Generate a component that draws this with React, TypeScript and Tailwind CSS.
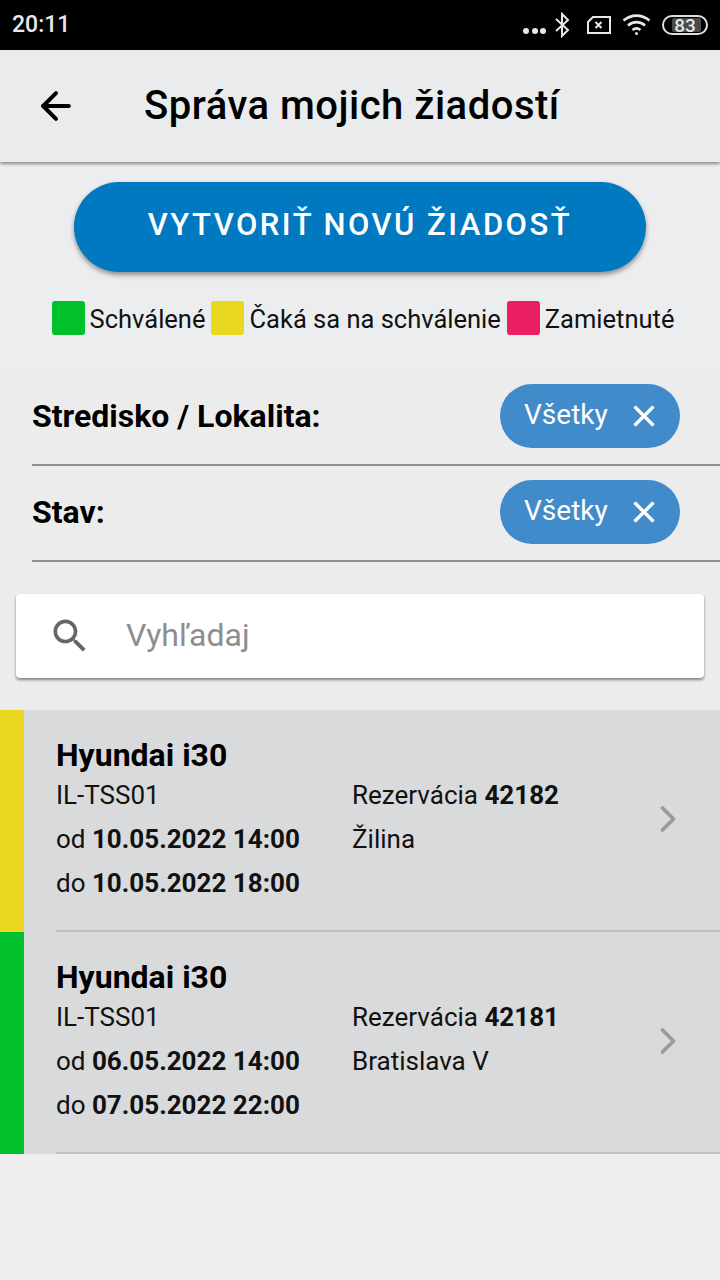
import React from 'react';
import { ArrowLeft, ChevronRight, X } from 'lucide-react';

const font = "font-['Roboto',sans-serif]";

const StatusIcons = () => (
  <div className="flex items-center">
    <div className="flex gap-[2.500px] mt-[12px] mr-[8px]">
      <span className="w-[6px] h-[6px] rounded-full bg-[#e8e8e8]" />
      <span className="w-[6px] h-[6px] rounded-full bg-[#e8e8e8]" />
      <span className="w-[6px] h-[6px] rounded-full bg-[#e8e8e8]" />
    </div>
    <svg width="16" height="26" viewBox="0 0 16 26" fill="none" stroke="#e8e8e8" strokeWidth="2" className="mr-[16px]">
      <path d="M2 7l12 11-6 6V2l6 6L2 19" />
    </svg>
    <svg width="25" height="20" viewBox="0 0 25 20" fill="none" stroke="#e8e8e8" strokeWidth="2" className="mr-[11px]">
      <path d="M7 2h17v16H2V7z" />
      <path d="M9.5 7l6 6M15.5 7l-6 6" />
    </svg>
    <svg width="29" height="22" viewBox="0 0 29 22" fill="none" stroke="#e8e8e8" strokeWidth="2.6" className="mr-[11px]">
      <path d="M1.5 6.5c8-6.500 18-6.500 26 0" />
      <path d="M6 11.500c5-4.500 12-4.500 17 0" />
      <path d="M10.500 16c2.500-2 5.500-2 8 0" />
      <circle cx="14.500" cy="19.500" r="1.500" fill="#e8e8e8" stroke="none" />
    </svg>
    <div className="relative w-[46px] h-[20px] rounded-full border-2 border-[#e0e0e0] flex items-center justify-center overflow-hidden">
      <div className="absolute left-[8px] top-[1px] bottom-[1px] w-[29px] rounded-[2px] bg-[#4a4a4a]" />
      <span className="relative text-[19px] leading-none font-medium text-[#e8e8e8]">83</span>
    </div>
  </div>
);

const Legend = ({ color, label }: { color: string; label: string }) => (
  <div className="flex items-start gap-[5px] h-[34px]">
    <span className={`w-[33px] h-[34px] rounded-[3px] ${color}`} />
    <span className="text-[25.500px] leading-[37px] h-[34px] text-[#111111]">{label}</span>
  </div>
);

const Filter = ({ label }: { label: string }) => (
  <div className="ml-[32px] h-[96px] border-b-2 border-[#8f8f8f] flex items-center justify-between pr-[40px] pb-[2px]">
    <span className="text-[32px] font-bold text-black">{label}</span>
    <div className="w-[180px] h-[64px] rounded-full bg-[#428bca] flex items-center pl-[24px] text-white">
      <span className="text-[28px] leading-none -mt-[3px] flex-1">Všetky</span>
      <X size={34} strokeWidth={2.4} className="mr-[19px]" />
    </div>
  </div>
);

const Row = ({
  color,
  from,
  to,
  id,
  place,
}: {
  color: string;
  from: string;
  to: string;
  id: string;
  place: string;
}) => (
  <div className="flex h-[222px]">
    <div className={`w-[24px] ${color}`} />
    <div className="flex-1 bg-[#d9dadc] pl-[32px]">
      <div className="h-full border-b-2 border-[#bfc0c2] flex items-center text-[#111111]">
        <div className="w-[296px] -mt-[1px]">
          <div className="text-[32px] leading-[43px] font-bold text-black">Hyundai i30</div>
          <div className="text-[26px] leading-[44px] -mt-[4px]">IL-TSS01</div>
          <div className="text-[26px] leading-[44px]">
            od <b>{from}</b>
          </div>
          <div className="text-[26px] leading-[44px]">
            do <b>{to}</b>
          </div>
        </div>
        <div className="flex-1 self-start mt-[63px]">
          <div className="text-[26px] leading-[44px]">
            Rezervácia <b>{id}</b>
          </div>
          <div className="text-[26px] leading-[44px]">{place}</div>
        </div>
        <ChevronRight size={44} strokeWidth={2} className="text-[#9a9b9d] mr-[30px] -mt-[2px]" />
      </div>
    </div>
  </div>
);

const App: React.FC = () => {
  return (
    <div className={`${font} w-[720px] h-[1280px] overflow-hidden bg-[#eeeeef] flex flex-col`}>
      {/* Status bar */}
      <div className="h-[50px] bg-black flex items-center justify-between pl-[12px] pr-[12px]">
        <span className="text-[23px] font-medium text-[#e8e8e8]">20:11</span>
        <StatusIcons />
      </div>

      {/* Header */}
      <div className="h-[112px] bg-[#e9ebed] flex items-center shadow-[0_2px_3px_rgba(0,0,0,0.4)] relative z-10">
        <ArrowLeft size={44} strokeWidth={2.2} className="ml-[34px] text-black" />
        <span className="ml-[66px] text-[40px] font-medium tracking-[0.5px] text-black">Správa mojich žiadostí</span>
      </div>

      {/* Create button */}
      <div className="bg-[#ebedef] pt-[20px] flex flex-col items-center">
        <button className="w-[572px] h-[90px] rounded-full bg-[#0079c1] text-white text-[31px] font-medium tracking-[2.500px] pb-[4px] shadow-[0_3px_5px_rgba(0,0,0,0.4)]">
          VYTVORIŤ NOVÚ ŽIADOSŤ
        </button>
        <div className="flex gap-[6px] mt-[29px] mb-[33px] ml-[6px]">
          <Legend color="bg-[#00c12b]" label="Schválené" />
          <Legend color="bg-[#e9d81f]" label="Čaká sa na schválenie" />
          <Legend color="bg-[#ea1f63]" label="Zamietnuté" />
        </div>
      </div>

      {/* Filters */}
      <div className="bg-[#ececec] pt-[2px]">
        <Filter label="Stredisko / Lokalita:" />
        <Filter label="Stav:" />
      </div>

      {/* Search */}
      <div className="bg-[#ececec] px-[16px] pt-[32px] pb-[32px]">
        <div className="h-[84px] bg-white rounded-[4px] flex items-center shadow-[0_2px_3px_rgba(0,0,0,0.45)]">
          <svg width="44" height="44" viewBox="0 0 24 24" fill="#666666" className="ml-[32px]">
            <path d="M15.5 14h-.79l-.28-.27C15.41 12.59 16 11.11 16 9.5 16 5.91 13.09 3 9.5 3S3 5.91 3 9.5 5.91 16 9.5 16c1.61 0 3.09-.59 4.23-1.57l.27.28v.79l5 4.99L20.49 19l-4.99-5zm-6 0C7.01 14 5 11.99 5 9.5S7.01 5 9.5 5 14 7.01 14 9.5 11.99 14 9.5 14z" />
          </svg>
          <span className="ml-[34px] text-[32px] leading-none pb-[3px] text-[#8e8e8e]">Vyhľadaj</span>
        </div>
      </div>

      {/* Requests */}
      <Row color="bg-[#e9d81f]" from="10.05.2022 14:00" to="10.05.2022 18:00" id="42182" place="Žilina" />
      <Row color="bg-[#00c12b]" from="06.05.2022 14:00" to="07.05.2022 22:00" id="42181" place="Bratislava V" />
    </div>
  );
};

export default App;
